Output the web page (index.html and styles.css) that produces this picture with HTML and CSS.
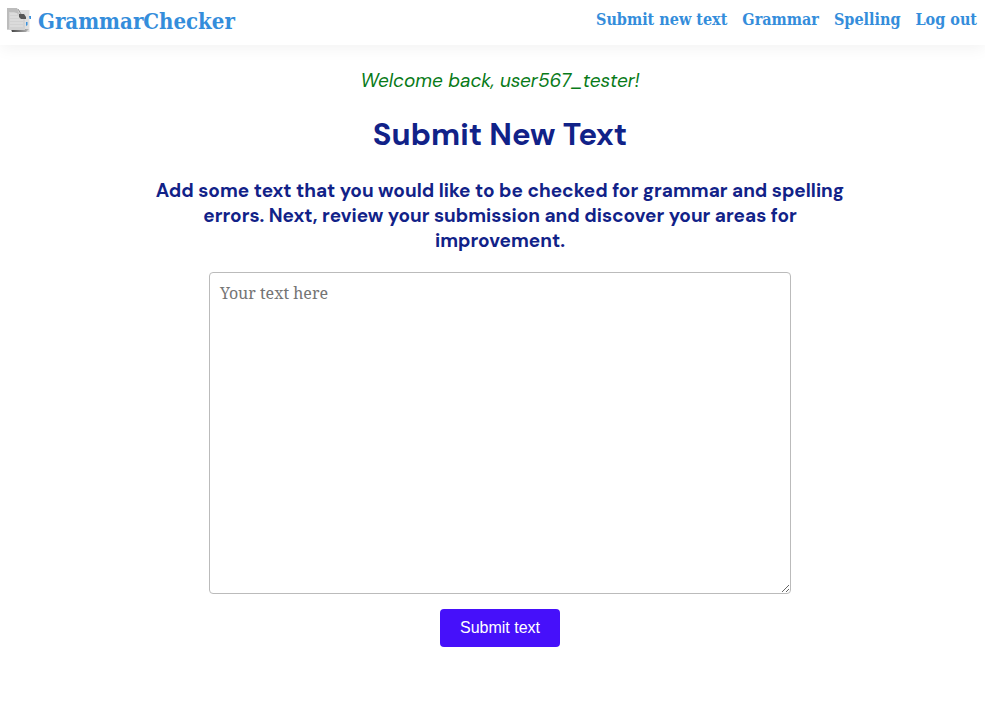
FILE: index.html
```html
<!DOCTYPE html>
<html lang="en">
<head>
  <meta charset="utf-8">
  <meta name="viewport" content="width=device-width, initial-scale=1">
  <title>GrammarChecker</title>
  <link rel="stylesheet" href="styles.css">
</head>
<body>
  <header class="navbar">
    <a class="brand" href="#">
      <svg class="brand-icon" viewBox="0 0 24 24" aria-hidden="true">
        <defs>
          <linearGradient id="fold" x1="0" y1="0" x2="1" y2="0">
            <stop offset="0" stop-color="#444"/>
            <stop offset="1" stop-color="#bbb"/>
          </linearGradient>
        </defs>
        <path d="M9 2h13.500v22H9z" fill="#dedede"/>
        <path d="M4 21h18l-3 3H5z" fill="url(#fold)"/>
        <path d="M0 0h10l3 5 5 4v13H0z" fill="#d2d2d2"/>
        <path d="M0 0h10l2 6-5-2H2v17H0z" fill="#bcbcbc"/>
        <path d="M3 6h7M3 9h9M3 12h13M3 15h13M3 18h13" stroke="#e4e4e4" fill="none"/>
        <path d="M12 6h5l2 3v2h-5l-2-2z" fill="#555"/>
        <path d="M11 1l3 5" stroke="#999"/>
        <path d="M19 14h1.500v3L19 18zM22 8h2v3h-1.500z" fill="#3a91dc"/>
      </svg>
      <span>GrammarChecker</span>
    </a>
    <nav class="links">
      <a href="#">Submit new text</a>
      <a href="#">Grammar</a>
      <a href="#">Spelling</a>
      <a href="#">Log out</a>
    </nav>
  </header>
  <main class="content">
    <p class="welcome">Welcome back, user567_tester!</p>
    <h1>Submit New Text</h1>
    <h2><label for="text">Add some text that you would like to be checked for grammar and spelling errors. Next, review your submission and discover your areas for improvement.</label></h2>
    <form class="form">
      <textarea id="text" name="text" placeholder="Your text here"></textarea>
      <button type="submit">Submit text</button>
    </form>
  </main>
</body>
</html>
```

FILE: styles.css
```css
* {
  box-sizing: border-box;
}

body {
  margin: 0;
  background: #fff;
  color: #112288;
  font-family: "DM Sans", Inter, sans-serif;
}

.navbar {
  display: flex;
  justify-content: space-between;
  align-items: flex-start;
  padding: 7px 8px 7px 7px;
  min-height: 45px;
  box-shadow: 0 4px 16px rgba(0, 0, 0, 0.05);
}

.navbar a {
  color: #348ddb;
  text-decoration: none;
}

.brand {
  display: flex;
  gap: 7px;
  font: bold 22px/28px "Special Elite", "DejaVu Serif Condensed", "DejaVu Serif", serif;
}

.brand-icon {
  width: 24px;
  height: 24px;
  margin-top: 1px;
}

.links {
  display: flex;
  gap: 15px;
  font: bold 16px/26px "Special Elite", "DejaVu Serif Condensed", "DejaVu Serif", serif;
}

.content {
  max-width: 715px;
  margin: 0 auto;
  padding: 23px 0 23px 15px;
  text-align: center;
}

.welcome {
  margin: 0;
  color: #087a18;
  font-size: 19px;
  line-height: 26px;
  font-style: italic;
}

h1 {
  margin: 20px 0 22px;
  font-size: 31px;
  line-height: 42px;
}

h2 {
  margin: 0 0 19px;
  font-size: 19px;
  line-height: 25px;
}

.form {
  display: flex;
  flex-direction: column;
  align-items: center;
  gap: 15px;
}

textarea {
  width: 582px;
  max-width: 100%;
  height: 322px;
  padding: 9px 10px;
  border: 1px solid #bbb;
  border-radius: 4px;
  font: 16px/22px "Droid Serif", "Noto Serif", "DejaVu Serif Condensed", serif;
}

textarea::placeholder {
  color: #757575;
}

button {
  padding: 9px 20px;
  border: 0;
  border-radius: 4px;
  background: #4610fa;
  color: #fff;
  font: 16px/20px "Liberation Sans", Arial, sans-serif;
}
```
